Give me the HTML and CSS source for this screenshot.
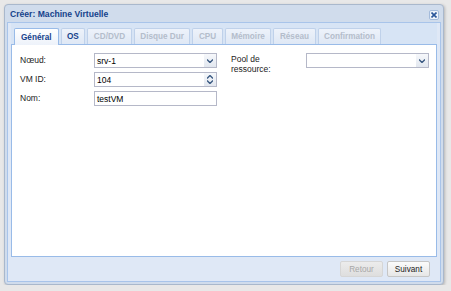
FILE: index.html
```html
<!DOCTYPE html>
<html>
<head>
<meta charset="utf-8">
<link rel="stylesheet" href="styles.css">
</head>
<body>
<div class="window">
  <div class="win-header">
    <span class="win-title">Créer: Machine Virtuelle</span>
    <span class="close-tool">
      <svg width="6" height="6" viewBox="0 0 6 6"><path d="M0.5 0.5L5.5 5.5M5.5 0.5L0.5 5.5" stroke="#2a5699" stroke-width="1.6"/></svg>
    </span>
  </div>
  <div class="win-body">
    <div class="tabstrip">
      <div class="tab active">Général</div>
      <div class="tab">OS</div>
      <div class="tab disabled">CD/DVD</div>
      <div class="tab disabled">Disque Dur</div>
      <div class="tab disabled">CPU</div>
      <div class="tab disabled">Mémoire</div>
      <div class="tab disabled">Réseau</div>
      <div class="tab disabled">Confirmation</div>
    </div>
    <div class="tab-body">
      <div class="col">
        <div class="row">
          <label class="lbl">Nœud:</label>
          <div class="field"><span class="val">srv-1</span><span class="trigger"><svg width="6" height="4" viewBox="0 0 6 4"><path d="M0 0.5L3 3.5L6 0.5" fill="none" stroke="#3b5a82" stroke-width="1.4"/></svg></span></div>
        </div>
        <div class="row">
          <label class="lbl">VM ID:</label>
          <div class="field"><span class="val">104</span><span class="trigger spin"><svg width="6" height="4" viewBox="0 0 6 4"><path d="M0 3.5L3 0.5L6 3.5" fill="none" stroke="#3b5a82" stroke-width="1.4"/></svg><svg width="6" height="4" viewBox="0 0 6 4"><path d="M0 0.5L3 3.5L6 0.5" fill="none" stroke="#3b5a82" stroke-width="1.4"/></svg></span></div>
        </div>
        <div class="row">
          <label class="lbl">Nom:</label>
          <div class="field"><span class="val">testVM</span></div>
        </div>
      </div>
      <div class="col col2">
        <div class="row">
          <label class="lbl lbl2">Pool de<br>ressource:</label>
          <div class="field"><span class="val"></span><span class="trigger"><svg width="6" height="4" viewBox="0 0 6 4"><path d="M0 0.5L3 3.5L6 0.5" fill="none" stroke="#3b5a82" stroke-width="1.4"/></svg></span></div>
        </div>
      </div>
    </div>
    <div class="footer">
      <button class="btn disabled">Retour</button>
      <button class="btn">Suivant</button>
    </div>
  </div>
</div>
</body>
</html>
```
FILE: styles.css
```css
html, body {
  margin: 0;
  padding: 0;
  background: #e8e8e8;
  font-family: "Liberation Sans", Arial, sans-serif;
  font-size: 8.5px;
}
.window {
  margin: 4px 0 0 4px;
  width: 440px;
  height: 281px;
  box-sizing: border-box;
  border: 1px solid #a9b8cc;
  border-radius: 4px;
  background: #d0dcec;
  box-shadow: 1px 1px 3px rgba(0,0,0,0.22);
  display: flex;
  flex-direction: column;
  padding: 0 2px 2px 2px;
}
.win-header {
  height: 17px;
  flex: none;
  display: flex;
  align-items: center;
  justify-content: space-between;
  padding: 0 2px 0 3px;
}
.win-title {
  font-weight: bold;
  color: #15428b;
  font-size: 8.6px;
  padding-top: 1px;
}
.close-tool {
  width: 10px;
  height: 10px;
  background: #eef3fa;
  border: 1px solid #a4bbdb;
  border-radius: 2px;
  display: flex;
  align-items: center;
  justify-content: center;
  box-sizing: border-box;
  margin-top: 2px;
}
.win-body {
  flex: 1;
  display: flex;
  flex-direction: column;
  background: #dfe8f6;
  border: 1px solid #a8c4ea;
  padding: 0 3px;
  min-height: 0;
}
.tabstrip {
  flex: none;
  display: flex;
  gap: 2px;
  padding: 5px 0 0 3px;
  height: 16px;
  background: #d7e4f5;
  border-bottom: 1px solid #99bbe8;
  align-items: flex-end;
}
.tab {
  height: 15px;
  padding: 0 5.5px;
  background: linear-gradient(#edf2fa, #dfe8f5);
  border: 1px solid #bfd1ea;
  border-bottom: none;
  border-radius: 2px 2px 0 0;
  font-weight: bold;
  color: #15428b;
  display: flex;
  align-items: center;
  font-size: 8.2px;
}
.tab.active {
  background: linear-gradient(#ffffff, #edf2fa);
  border-color: #99bbe8;
  height: 16px;
  margin-bottom: -1px;
  padding: 0 6px;
}
.tab.disabled {
  color: #b4bdcb;
}
.tab-body {
  flex: 1;
  background: #fff;
  border: 1px solid #99bbe8;
  border-top: none;
  display: flex;
  padding: 8px 0 0 8px;
}
.col {
  display: flex;
  flex-direction: column;
  gap: 4px;
}
.col2 {
  margin-left: 14px;
}
.row {
  display: flex;
  align-items: flex-start;
}
.lbl {
  width: 74px;
  color: #222;
  padding-top: 2px;
  line-height: 10px;
}
.lbl2 {
  width: 75px;
  padding-top: 1px;
}
.field {
  width: 123px;
  height: 15px;
  box-sizing: border-box;
  border: 1px solid #b5b8c8;
  background: #fff;
  display: flex;
  align-items: center;
  padding-left: 2px;
  color: #000;
}
.field .val {
  flex: 1;
}
.trigger {
  width: 12px;
  height: 13px;
  background: linear-gradient(#f6f8fb, #e2e7ef);
  display: flex;
  align-items: center;
  justify-content: center;
}
.trigger.spin {
  flex-direction: column;
  gap: 1px;
}
.footer {
  height: 24px;
  flex: none;
  display: flex;
  justify-content: flex-end;
  align-items: center;
  gap: 4px;
  padding-right: 7px;
}
.btn {
  width: 43px;
  height: 16px;
  font-family: "Liberation Sans", Arial, sans-serif;
  font-size: 8.2px;
  border: 1px solid #c6c6c6;
  border-radius: 2px;
  background: linear-gradient(#fbfbfb, #e6e6e6);
  color: #222;
  padding: 0;
}
.btn.disabled {
  color: #a8a8a8;
  background: linear-gradient(#ececec, #dedede);
  border-color: #d6d6d6;
}
```
